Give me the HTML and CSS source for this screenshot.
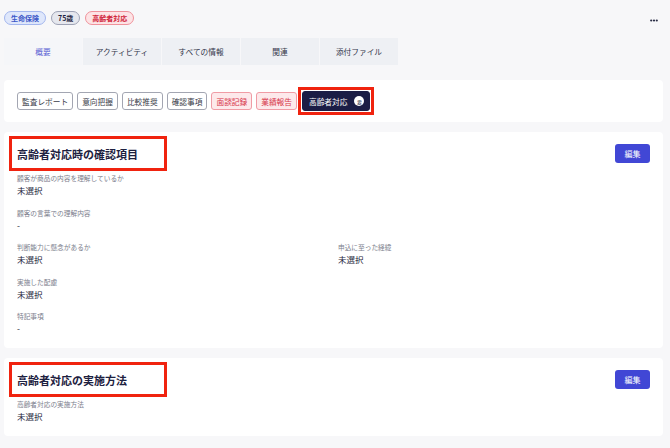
FILE: index.html
```html
<!DOCTYPE html>
<html lang="ja">
<head>
    <meta charset="UTF-8">
    <meta name="viewport" content="width=device-width, initial-scale=1.0">
    <title>高齢者対応</title>
    <link rel="stylesheet" href="styles.css">
</head>
<body>
    <div class="topo">
        <div class="etiquetas">
            <span class="etiqueta azul">生命保険</span>
            <span class="etiqueta cinza">75歳</span>
            <span class="etiqueta vermelha">高齢者対応</span>
        </div>
        <svg class="mais" width="8" height="3" viewBox="0 0 8 3">
            <circle cx="1.2" cy="1.5" r="1.1" fill="#2a2d45"/>
            <circle cx="4" cy="1.5" r="1.1" fill="#2a2d45"/>
            <circle cx="6.8" cy="1.5" r="1.1" fill="#2a2d45"/>
        </svg>
    </div>

    <div class="abas">
        <div class="aba ativa">概要</div>
        <div class="aba">アクティビティ</div>
        <div class="aba">すべての情報</div>
        <div class="aba">関連</div>
        <div class="aba">添付ファイル</div>
    </div>

    <div class="cartao botoes">
        <button class="botao">監査レポート</button>
        <button class="botao">意向把握</button>
        <button class="botao">比較推奨</button>
        <button class="botao">確認事項</button>
        <button class="botao alerta">面談記録</button>
        <button class="botao alerta">業績報告</button>
        <span class="destaque">
            <button class="botao escuro">高齢者対応 <span class="bolinha">要</span></button>
        </span>
    </div>

    <div class="cartao secao">
        <div class="cabecalho">
            <h2 class="titulo">高齢者対応時の確認項目</h2>
            <button class="editar">編集</button>
        </div>
        <div class="campos">
            <div class="campo inteiro">
                <p class="rotulo">顧客が商品の内容を理解しているか</p>
                <p class="valor">未選択</p>
            </div>
            <div class="campo inteiro">
                <p class="rotulo">顧客の言葉での理解内容</p>
                <p class="valor">-</p>
            </div>
            <div class="campo">
                <p class="rotulo">判断能力に懸念があるか</p>
                <p class="valor">未選択</p>
            </div>
            <div class="campo">
                <p class="rotulo">申込に至った経緯</p>
                <p class="valor">未選択</p>
            </div>
            <div class="campo inteiro">
                <p class="rotulo">実施した配慮</p>
                <p class="valor">未選択</p>
            </div>
            <div class="campo inteiro">
                <p class="rotulo">特記事項</p>
                <p class="valor">-</p>
            </div>
        </div>
    </div>

    <div class="cartao secao">
        <div class="cabecalho">
            <h2 class="titulo">高齢者対応の実施方法</h2>
            <button class="editar">編集</button>
        </div>
        <div class="campos">
            <div class="campo inteiro">
                <p class="rotulo">高齢者対応の実施方法</p>
                <p class="valor">未選択</p>
            </div>
        </div>
    </div>
</body>
</html>
```

FILE: styles.css
```css
* {
    margin: 0;
    padding: 0;
    box-sizing: border-box;
}
body {
    background-color: #f7f7f9;
    font-family: "Noto Sans CJK JP", "Noto Sans", sans-serif;
    color: #22243a;
    padding: 11px 7px 0 4px;
}
.topo {
    display: flex;
    justify-content: space-between;
    align-items: center;
    height: 14px;
}
.etiquetas {
    display: flex;
    gap: 5px;
}
.etiqueta {
    height: 14px;
    line-height: 12px;
    padding: 0 6px;
    border-radius: 7px;
    font-size: 7px;
    font-weight: bold;
    border: 1px solid;
}
.azul {
    background-color: #dfe7fb;
    border-color: #a3b6ee;
    color: #3d57c8;
}
.cinza {
    background-color: #e5e7ee;
    border-color: #9ea2b5;
    color: #1e2340;
}
.vermelha {
    background-color: #fde3e5;
    border-color: #ef929b;
    color: #d0263c;
}
.mais {
    margin: 4px 5px 0 0;
}
.abas {
    display: flex;
    margin-top: 13px;
    height: 27px;
}
.aba {
    width: 78px;
    margin-right: 1px;
    background-color: #eef0f4;
    font-size: 7.7px;
    color: #33364a;
    display: flex;
    justify-content: center;
    align-items: center;
}
.aba.ativa {
    background-color: #f5f6f9;
    color: #5a5fd3;
}
.cartao {
    background-color: #fff;
    border-radius: 4px;
    margin-bottom: 10px;
}
.botoes {
    margin-top: 15px;
    height: 42px;
    padding: 0 13px;
    display: flex;
    align-items: center;
    gap: 4px;
}
.botao {
    height: 18px;
    padding: 0 4px;
    font-family: inherit;
    font-size: 7.7px;
    color: #3a3d4a;
    background-color: #fff;
    border: 1px solid #a3a6b2;
    border-radius: 3px;
}
.botao.alerta {
    background-color: #fde9eb;
    border-color: #f09ca5;
    color: #d63347;
}
.destaque {
    display: flex;
    border: 3px solid #f0230f;
    padding: 1px;
    margin-left: -3px;
}
.botao.escuro {
    height: 20px;
    padding: 0 5px 0 6px;
    background-color: #1b1d45;
    border-color: #1b1d45;
    color: #fff;
    display: flex;
    align-items: center;
    gap: 4px;
}
.bolinha {
    width: 10px;
    height: 10px;
    border-radius: 50%;
    background-color: #fff;
    color: #1b1d45;
    font-size: 5px;
    display: flex;
    justify-content: center;
    align-items: center;
    margin-left: 3px;
}
.secao {
    padding: 4px 13px 14px;
}
.cabecalho {
    display: flex;
    justify-content: space-between;
    align-items: center;
    margin-bottom: 2px;
}
.titulo {
    width: 158px;
    height: 35px;
    margin-left: -8px;
    padding-left: 5px;
    border: 3px solid #f0230f;
    font-size: 11px;
    color: #1d2140;
    display: flex;
    align-items: center;
}
.editar {
    width: 35px;
    height: 19px;
    border: none;
    border-radius: 3px;
    background-color: #4147d5;
    color: #fff;
    font-family: inherit;
    font-size: 8px;
}
.campos {
    display: grid;
    grid-template-columns: 1fr 1fr;
    column-gap: 9px;
    row-gap: 11.5px;
}
.campo.inteiro {
    grid-column: 1 / 3;
}
.rotulo {
    font-size: 6.7px;
    line-height: 10px;
    color: #7b7e8c;
    margin-bottom: 2px;
}
.valor {
    font-size: 8.5px;
    line-height: 11px;
    color: #23253a;
}
```
